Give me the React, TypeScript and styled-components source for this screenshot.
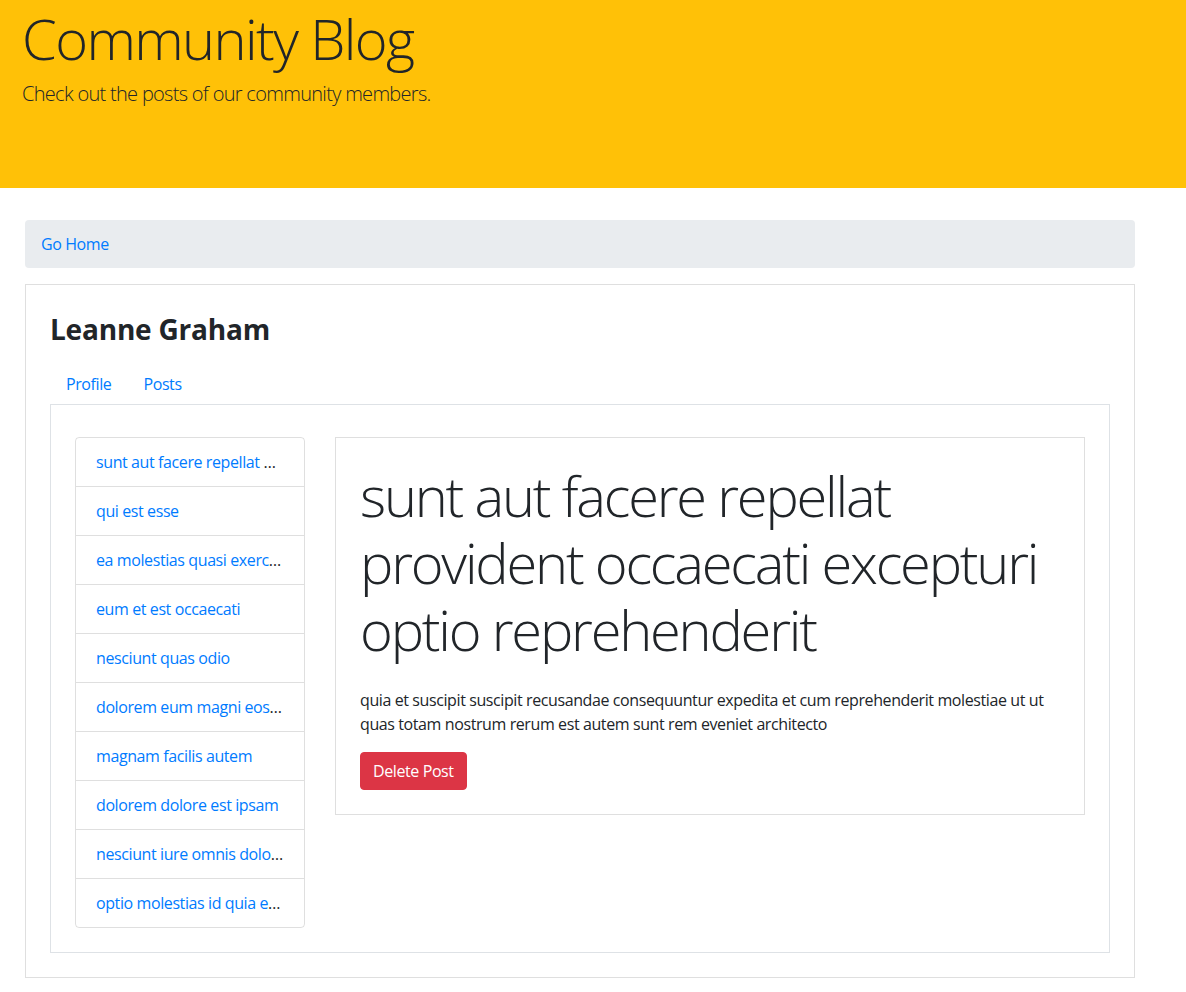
import React from "react";
import styled, { createGlobalStyle } from "styled-components";

const FONT = `"Segoe UI", "Open Sans", "Noto Sans", Roboto, "Liberation Sans", sans-serif`;

const GlobalStyle = createGlobalStyle`
  *, *::before, *::after { box-sizing: border-box; }
  html, body { margin: 0; padding: 0; background: #fff; }
  body {
    font-family: ${FONT};
    font-size: 16px;
    line-height: 1.5;
    letter-spacing: -0.4px;
    color: #212529;
  }
`;

const Jumbotron = styled.header`
  background: #ffc107;
  height: 188px;
  padding: 5px 22px 0;
  margin-bottom: 32px;
`;

const Display = styled.h1`
  margin: 0 0 7px;
  font-size: 56px;
  font-weight: 300;
  line-height: 1.2;
  letter-spacing: -1.6px;
  color: #212529;
`;

const Lead = styled.p`
  margin: 0;
  font-size: 20px;
  font-weight: 300;
  line-height: 30px;
  letter-spacing: -0.7px;
  color: #212529;
`;

const Container = styled.main`
  width: 1110px;
  margin-left: 25px;
`;

const Breadcrumb = styled.nav`
  background: #e9ecef;
  border-radius: 4px;
  padding: 12px 16px;
  margin-bottom: 16px;
  line-height: 24px;
`;

const Link = styled.a`
  color: #007bff;
  text-decoration: none;
  cursor: pointer;
`;

const Card = styled.section`
  border: 1px solid rgba(0, 0, 0, 0.125);
  padding: 28px 24px 24px;
  margin-bottom: 14px;
`;

const Name = styled.h3`
  margin: 0 0 17px;
  font-size: 28px;
  font-weight: 700;
  line-height: 1.2;
  letter-spacing: -0.2px;
`;

const Tabs = styled.ul`
  display: flex;
  list-style: none;
  margin: 0;
  padding: 0;
  border-bottom: 1px solid #dee2e6;
`;

const TabLink = styled.a`
  display: block;
  padding: 8px 16px;
  line-height: 24px;
  color: #007bff;
  text-decoration: none;
`;

const TabPane = styled.div`
  border: 1px solid #dee2e6;
  border-top: none;
  padding: 32px 24px 24px;
`;

const Row = styled.div`
  display: grid;
  grid-template-columns: 230px 750px;
  column-gap: 30px;
  align-items: start;
`;

const ListGroup = styled.ul`
  list-style: none;
  margin: 0;
  padding: 0;
  border: 1px solid rgba(0, 0, 0, 0.125);
  border-radius: 4px;
`;

const ListItem = styled.li`
  padding: 12px 20px;
  line-height: 24px;
  color: #212529;
  white-space: nowrap;
  overflow: hidden;
  text-overflow: ellipsis;
  & + & { border-top: 1px solid rgba(0, 0, 0, 0.125); }
`;

const PostCard = styled.article`
  border: 1px solid rgba(0, 0, 0, 0.125);
  padding: 24px;
`;

const PostTitle = styled.h1`
  margin: 0 0 25px;
  font-size: 56px;
  font-weight: 300;
  line-height: 1.2;
  letter-spacing: -2.2px;
`;

const PostBody = styled.p`
  margin: 0 0 16px;
  font-size: 16px;
  line-height: 24px;
`;

const DangerButton = styled.button`
  font-family: inherit;
  font-size: 16px;
  line-height: 24px;
  letter-spacing: inherit;
  padding: 6px 12px;
  border: 1px solid #dc3545;
  border-radius: 4px;
  background: #dc3545;
  color: #fff;
  cursor: pointer;
`;

const posts = [
  "sunt aut facere repellat provident occaecati excepturi optio reprehenderit",
  "qui est esse",
  "ea molestias quasi exercitationem repellat qui ipsa sit aut",
  "eum et est occaecati",
  "nesciunt quas odio",
  "dolorem eum magni eos aperiam quia",
  "magnam facilis autem",
  "dolorem dolore est ipsam",
  "nesciunt iure omnis dolorem tempora et accusantium",
  "optio molestias id quia eum",
];

export default function App() {
  return (
    <>
      <GlobalStyle />
      <Jumbotron>
        <Display>Community Blog</Display>
        <Lead>Check out the posts of our community members.</Lead>
      </Jumbotron>
      <Container>
        <Breadcrumb>
          <Link>Go Home</Link>
        </Breadcrumb>
        <Card>
          <Name>Leanne Graham</Name>
          <Tabs>
            <li><TabLink>Profile</TabLink></li>
            <li><TabLink>Posts</TabLink></li>
          </Tabs>
          <TabPane>
            <Row>
              <ListGroup>
                {posts.map((p) => (
                  <ListItem key={p}>
                    <Link>{p}</Link>
                  </ListItem>
                ))}
              </ListGroup>
              <PostCard>
                <PostTitle>
                  sunt aut facere repellat provident occaecati excepturi optio reprehenderit
                </PostTitle>
                <PostBody>
                  quia et suscipit suscipit recusandae consequuntur expedita et cum reprehenderit
                  molestiae ut ut quas totam nostrum rerum est autem sunt rem eveniet architecto
                </PostBody>
                <DangerButton>Delete Post</DangerButton>
              </PostCard>
            </Row>
          </TabPane>
        </Card>
      </Container>
    </>
  );
}
